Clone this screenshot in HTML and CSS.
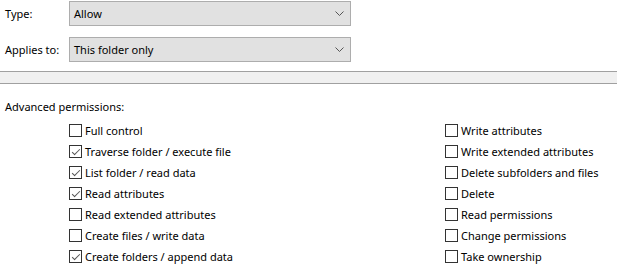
FILE: index.html
```html
<!DOCTYPE html>
<html lang="en">
<head>
    <meta charset="UTF-8">
    <title>Permission Entry</title>
    <link rel="stylesheet" href="styles.css">
</head>
<body>
    <div class="fields">
        <div class="field">
            <span class="field-label">Type:</span>
            <div class="select">
                <span>Allow</span>
                <svg class="chevron" width="9" height="5" viewBox="0 0 9 5"><path d="M0.5 0.5 L4.5 4.5 L8.5 0.5" fill="none" stroke="#555" stroke-width="1"/></svg>
            </div>
        </div>
        <div class="field">
            <span class="field-label">Applies to:</span>
            <div class="select">
                <span>This folder only</span>
                <svg class="chevron" width="9" height="5" viewBox="0 0 9 5"><path d="M0.5 0.5 L4.5 4.5 L8.5 0.5" fill="none" stroke="#555" stroke-width="1"/></svg>
            </div>
        </div>
    </div>

    <div class="band"></div>

    <div class="section-title">Advanced permissions:</div>

    <div class="perms">
        <div class="perm-col left">
            <label class="perm"><span class="box"></span>Full control</label>
            <label class="perm"><span class="box checked"></span>Traverse folder / execute file</label>
            <label class="perm"><span class="box checked"></span>List folder / read data</label>
            <label class="perm"><span class="box checked"></span>Read attributes</label>
            <label class="perm"><span class="box"></span>Read extended attributes</label>
            <label class="perm"><span class="box"></span>Create files / write data</label>
            <label class="perm"><span class="box checked"></span>Create folders / append data</label>
        </div>
        <div class="perm-col right">
            <label class="perm"><span class="box"></span>Write attributes</label>
            <label class="perm"><span class="box"></span>Write extended attributes</label>
            <label class="perm"><span class="box"></span>Delete subfolders and files</label>
            <label class="perm"><span class="box"></span>Delete</label>
            <label class="perm"><span class="box"></span>Read permissions</label>
            <label class="perm"><span class="box"></span>Change permissions</label>
            <label class="perm"><span class="box"></span>Take ownership</label>
        </div>
    </div>
</body>
</html>
```

FILE: styles.css
```css
body {
    margin: 0;
    background: #fff;
    color: #000;
    font-family: "Noto Sans", "Open Sans", sans-serif;
    font-size: 11px;
    width: 617px;
    height: 280px;
    overflow: hidden;
}

.fields {
    display: flex;
    flex-direction: column;
    gap: 11px;
    padding-top: 1px;
}

.field {
    display: flex;
    align-items: center;
}

.field-label {
    width: 64px;
    padding-left: 5px;
}

.select {
    height: 23px;
    width: 270px;
    background: #e1e1e1;
    border: 1px solid #adadad;
    display: flex;
    align-items: center;
    justify-content: space-between;
    padding: 0 6px 0 4px;
}

.chevron {
    display: block;
}

.band {
    margin-top: 9px;
    height: 11px;
    background: #f0f0f0;
    border-top: 1px solid #a0a0a0;
    border-bottom: 1px solid #a0a0a0;
}

.section-title {
    padding-left: 5px;
    margin-top: 15px;
    line-height: 16px;
}

.perms {
    display: flex;
    padding-left: 69px;
    margin-top: 5px;
}

.perm-col {
    display: flex;
    flex-direction: column;
}

.perm-col.left {
    width: 376px;
}

.perm {
    display: flex;
    align-items: center;
    height: 21px;
    line-height: 16px;
}

.box {
    width: 11px;
    height: 11px;
    border: 1px solid #333;
    margin-right: 3px;
    position: relative;
    flex: none;
}

.box.checked::after {
    content: "";
    position: absolute;
    left: 2px;
    top: 1px;
    width: 7px;
    height: 3px;
    border-left: 1px solid #555;
    border-bottom: 1px solid #555;
    transform: translate(0, 2px) rotate(-45deg);
}
```
